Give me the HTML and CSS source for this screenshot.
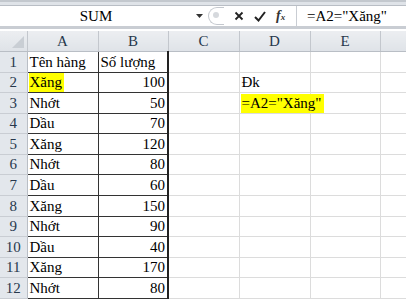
FILE: index.html
```html
<!DOCTYPE html>
<html lang="vi">
<head>
  <meta charset="UTF-8" />
  <title>Excel - SUM</title>
  <link rel="stylesheet" href="styles.css">
</head>
<body>

<div class="excel">
  <div class="ribbon-edge"></div>

  <div class="formula-bar">
    <div class="name-box">SUM</div>
    <div class="name-drop">
      <svg width="7" height="4" viewBox="0 0 7 4"><path d="M0 0H7L3.5 4Z" fill="#333"/></svg>
    </div>
    <div class="fx-tools">
      <span class="grip"></span>
      <svg class="tool" width="10" height="10" viewBox="0 0 10 10"><path d="M1.5 1.5L8.5 8.5M8.5 1.5L1.5 8.5" stroke="#222" stroke-width="1.8"/></svg>
      <svg class="tool" width="12" height="11" viewBox="0 0 12 11"><path d="M1 6L4.5 9.5L11 1" stroke="#222" stroke-width="2" fill="none"/></svg>
      <span class="fx"><i>f</i><small>x</small></span>
    </div>
    <div class="formula">=A2="Xăng"</div>
  </div>

  <table class="sheet">
    <colgroup>
      <col class="c-row"><col class="c-a"><col class="c-b"><col class="c-c"><col class="c-d"><col class="c-e"><col class="c-f">
    </colgroup>
    <thead>
      <tr>
        <th class="corner"><span class="tri"></span></th>
        <th>A</th><th>B</th><th>C</th><th>D</th><th>E</th><th></th>
      </tr>
    </thead>
    <tbody>
      <tr class="h21"><th>1</th><td class="t">Tên hàng</td><td class="t tb">Số lượng</td><td></td><td></td><td></td><td></td></tr>
      <tr class="h20"><th>2</th><td class="t"><mark>Xăng</mark></td><td class="t tb num">100</td><td></td><td>Đk</td><td></td><td></td></tr>
      <tr class="h21"><th>3</th><td class="t">Nhớt</td><td class="t tb num">50</td><td></td><td><mark>=A2="Xăng"</mark></td><td></td><td></td></tr>
      <tr class="h20"><th>4</th><td class="t">Dầu</td><td class="t tb num">70</td><td></td><td></td><td></td><td></td></tr>
      <tr class="h21"><th>5</th><td class="t">Xăng</td><td class="t tb num">120</td><td></td><td></td><td></td><td></td></tr>
      <tr class="h20"><th>6</th><td class="t">Nhớt</td><td class="t tb num">80</td><td></td><td></td><td></td><td></td></tr>
      <tr class="h21"><th>7</th><td class="t">Dầu</td><td class="t tb num">60</td><td></td><td></td><td></td><td></td></tr>
      <tr class="h21"><th>8</th><td class="t">Xăng</td><td class="t tb num">150</td><td></td><td></td><td></td><td></td></tr>
      <tr class="h20"><th>9</th><td class="t">Nhớt</td><td class="t tb num">90</td><td></td><td></td><td></td><td></td></tr>
      <tr class="h21"><th>10</th><td class="t">Dầu</td><td class="t tb num">40</td><td></td><td></td><td></td><td></td></tr>
      <tr class="h20"><th>11</th><td class="t">Xăng</td><td class="t tb num">170</td><td></td><td></td><td></td><td></td></tr>
      <tr class="h21"><th>12</th><td class="t">Nhớt</td><td class="t tb num">80</td><td></td><td></td><td></td><td></td></tr>
    </tbody>
  </table>
</div>

</body>
</html>
```

FILE: styles.css
```css
body {
  margin: 0;
  background: #fff;
  font-family: "Liberation Serif", "Times New Roman", serif;
  color: #000;
}

.excel {
  width: 406px;
  height: 305px;
  overflow: hidden;
  background: #fff;
}

.ribbon-edge {
  height: 6px;
  background: #dfe3e8;
  border-top: 2px solid #c3c8ce;
  box-sizing: border-box;
  border-bottom: 1px solid #b9bec5;
}

.formula-bar {
  display: flex;
  align-items: center;
  height: 20px;
  background: #fff;
  border-bottom: 3px solid #c9cdd3;
  font-size: 15px;
}

.name-box {
  width: 192px;
  text-align: center;
  line-height: 20px;
}

.name-drop {
  width: 14px;
  display: flex;
  align-items: center;
  justify-content: center;
}

.fx-tools {
  display: flex;
  align-items: center;
  height: 20px;
  width: 91px;
  gap: 10px;
  border-right: 1px solid #c9cdd3;
  box-sizing: border-box;
}

.grip {
  width: 16px;
  height: 18px;
  border: 1px solid #c4c8ce;
  border-right: none;
  border-radius: 10px 0 0 10px;
  box-sizing: border-box;
  position: relative;
  margin-left: 2px;
}

.grip::after {
  content: "";
  position: absolute;
  left: 4px;
  top: 4px;
  width: 6px;
  height: 6px;
  border-radius: 50%;
  background: #d6d9dd;
}

.tool {
  flex: none;
}

.fx {
  font-size: 14px;
  font-weight: bold;
  color: #333;
  line-height: 1;
}

.fx small {
  font-size: 9px;
  font-style: italic;
}

.formula {
  padding-left: 10px;
  line-height: 20px;
}

.sheet {
  border-collapse: collapse;
  table-layout: fixed;
  width: 406px;
  margin-top: 2px;
  font-size: 15px;
}

.c-row { width: 27px; }
.c-a { width: 71px; }
.c-b { width: 70px; }
.c-c { width: 71px; }
.c-d { width: 71px; }
.c-e { width: 70px; }
.c-f { width: 26px; }

.sheet thead th {
  height: 20px;
  padding: 0;
  font-weight: normal;
  background: linear-gradient(#eceef1, #dfe3e8);
  border-right: 1px solid #c3c7cd;
  border-bottom: 1px solid #b9bec5;
  color: #27384c;
}

.corner {
  position: relative;
}

.tri {
  position: absolute;
  right: 3px;
  bottom: 3px;
  width: 0;
  height: 0;
  border-left: 12px solid transparent;
  border-bottom: 12px solid #c9ced4;
}

.sheet tbody th {
  padding: 0;
  font-weight: normal;
  background: #e3e7ec;
  border-right: 1px solid #b9bec5;
  border-bottom: 1px solid #c9cdd3;
  color: #27384c;
  text-align: center;
}

.sheet td {
  padding: 0 2px;
  border-right: 1px solid #dcdcdc;
  border-bottom: 1px solid #dcdcdc;
  white-space: nowrap;
  overflow: visible;
}

.h21 { height: 21px; }
.h20 { height: 20px; }

.sheet td.t {
  border-bottom: 1px solid #333;
  border-right: 1px solid #333;
}

.sheet td.tb {
  border-right: 2px solid #222;
}

.num {
  text-align: right;
}

mark {
  background: #ffff00;
  color: #000;
  padding: 1px 2px 2px 1px;
  margin-left: -1px;
}
```
